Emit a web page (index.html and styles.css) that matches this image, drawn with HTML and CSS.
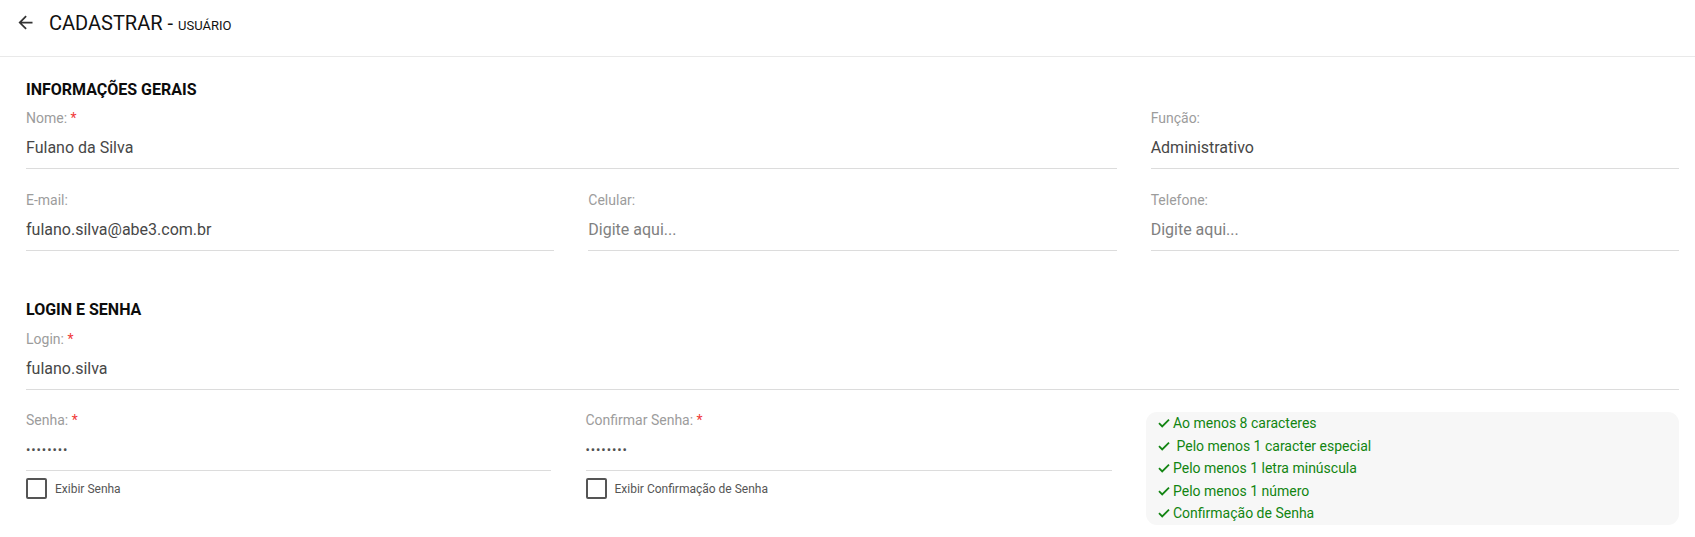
FILE: index.html
```html
<!DOCTYPE html>
<html lang="pt-BR">
<head>
<meta charset="utf-8">
<title>Cadastrar - Usuário</title>
<link rel="stylesheet" href="styles.css">
</head>
<body>
<header class="topbar">
  <svg class="back" viewBox="0 0 24 24" width="21" height="21" aria-hidden="true"><path d="M20 11H7.83l5.59-5.59L12 4l-8 8 8 8 1.41-1.41L7.83 13H20v-2z" fill="#333"/></svg>
  <h1 class="title">CADASTRAR - <span class="sub">USUÁRIO</span></h1>
</header>
<main class="content">
  <section class="section s1">
    <h2 class="sec-title">INFORMAÇÕES GERAIS</h2>
    <div class="grid">
      <div class="field span2">
        <div class="label">Nome: <span class="req">*</span></div>
        <div class="value">Fulano da Silva</div>
      </div>
      <div class="field">
        <div class="label">Função:</div>
        <div class="value">Administrativo</div>
      </div>
    </div>
    <div class="grid row2">
      <div class="field">
        <div class="label">E-mail:</div>
        <div class="value">fulano.silva@abe3.com.br</div>
      </div>
      <div class="field">
        <div class="label">Celular:</div>
        <div class="value ph">Digite aqui...</div>
      </div>
      <div class="field">
        <div class="label">Telefone:</div>
        <div class="value ph">Digite aqui...</div>
      </div>
    </div>
  </section>
  <section class="section s2">
    <h2 class="sec-title">LOGIN E SENHA</h2>
    <div class="field">
      <div class="label">Login: <span class="req">*</span></div>
      <div class="value">fulano.silva</div>
    </div>
    <div class="pwgrid">
      <div class="pwcol">
        <div class="field">
          <div class="label">Senha: <span class="req">*</span></div>
          <div class="value dots">••••••••</div>
        </div>
        <label class="check"><span class="box"></span><span>Exibir Senha</span></label>
      </div>
      <div class="pwcol">
        <div class="field">
          <div class="label">Confirmar Senha: <span class="req">*</span></div>
          <div class="value dots">••••••••</div>
        </div>
        <label class="check"><span class="box"></span><span>Exibir Confirmação de Senha</span></label>
      </div>
      <ul class="rules">
        <li><svg class="tick" viewBox="0 0 12 10" width="12" height="10"><path d="M1 5.2l3.2 3.2L11 1.6" fill="none" stroke="#138513" stroke-width="1.8"/></svg>Ao menos 8 caracteres</li>
        <li><svg class="tick" viewBox="0 0 12 10" width="12" height="10"><path d="M1 5.2l3.2 3.2L11 1.6" fill="none" stroke="#138513" stroke-width="1.8"/></svg>&nbsp;Pelo menos 1 caracter especial</li>
        <li><svg class="tick" viewBox="0 0 12 10" width="12" height="10"><path d="M1 5.2l3.2 3.2L11 1.6" fill="none" stroke="#138513" stroke-width="1.8"/></svg>Pelo menos 1 letra minúscula</li>
        <li><svg class="tick" viewBox="0 0 12 10" width="12" height="10"><path d="M1 5.2l3.2 3.2L11 1.6" fill="none" stroke="#138513" stroke-width="1.8"/></svg>Pelo menos 1 número</li>
        <li><svg class="tick" viewBox="0 0 12 10" width="12" height="10"><path d="M1 5.2l3.2 3.2L11 1.6" fill="none" stroke="#138513" stroke-width="1.8"/></svg>Confirmação de Senha</li>
      </ul>
    </div>
  </section>
</main>
</body>
</html>
```
FILE: styles.css
```css
* { box-sizing: border-box; }
html, body { margin: 0; padding: 0; background: #fff; }
body { font-family: Roboto, "Liberation Sans", Arial, sans-serif; color: #222; }

.topbar {
  height: 57px;
  border-bottom: 1px solid #e9e9e9;
  display: flex;
  align-items: flex-start;
  padding: 12px 0 0 15px;
}
.back { display: block; margin-top: 0; }
.title {
  margin: -1px 0 0 13px;
  font-size: 20px;
  line-height: 24px;
  font-weight: 400;
  color: #111;
}
.sub { font-size: 13px; }

.content { padding: 0 16px 0 26px; }
.section { display: flex; flex-direction: column; }
.s1 { padding-top: 23px; }
.s2 { padding-top: 49px; }
.sec-title {
  margin: 0 0 10px;
  font-size: 16px;
  line-height: 20px;
  font-weight: 700;
  color: #0c0c0c;
}
.s2 .sec-title { margin-bottom: 11px; }

.grid {
  display: grid;
  grid-template-columns: 1fr 1fr 1fr;
  column-gap: 34px;
}
.row2 { margin-top: 23px; }
.span2 { grid-column: span 2; }

.field { display: flex; flex-direction: column; }
.label {
  font-size: 14px;
  line-height: 17px;
  color: #9c9c9c;
  margin-bottom: 11px;
}
.req { color: #f03a3a; }
.value {
  font-size: 16px;
  line-height: 20px;
  color: #474747;
  padding-bottom: 10px;
  border-bottom: 1px solid #dcdcdc;
}
.value.ph { color: #808080; }
.value.dots { font-size: 13px; letter-spacing: 0.9px; color: #505050; }

.pwgrid {
  margin-top: 22px;
  display: grid;
  grid-template-columns: 525px 526px 1fr;
  column-gap: 34.5px;
  align-items: start;
}
.check {
  margin-top: 7px;
  display: flex;
  align-items: center;
  gap: 8px;
  font-size: 12px;
  color: #555;
}
.box {
  width: 21px;
  height: 21px;
  border: 2px solid #555;
  border-radius: 2px;
  flex: none;
}

.rules {
  list-style: none;
  margin: 0;
  padding: 0 12px;
  background: #f7f7f7;
  border-radius: 11px;
}
.rules li {
  font-size: 14px;
  line-height: 22.5px;
  color: #118511;
  display: flex;
  align-items: center;
  white-space: pre;
}
.tick { flex: none; margin-right: 3px; }
```
